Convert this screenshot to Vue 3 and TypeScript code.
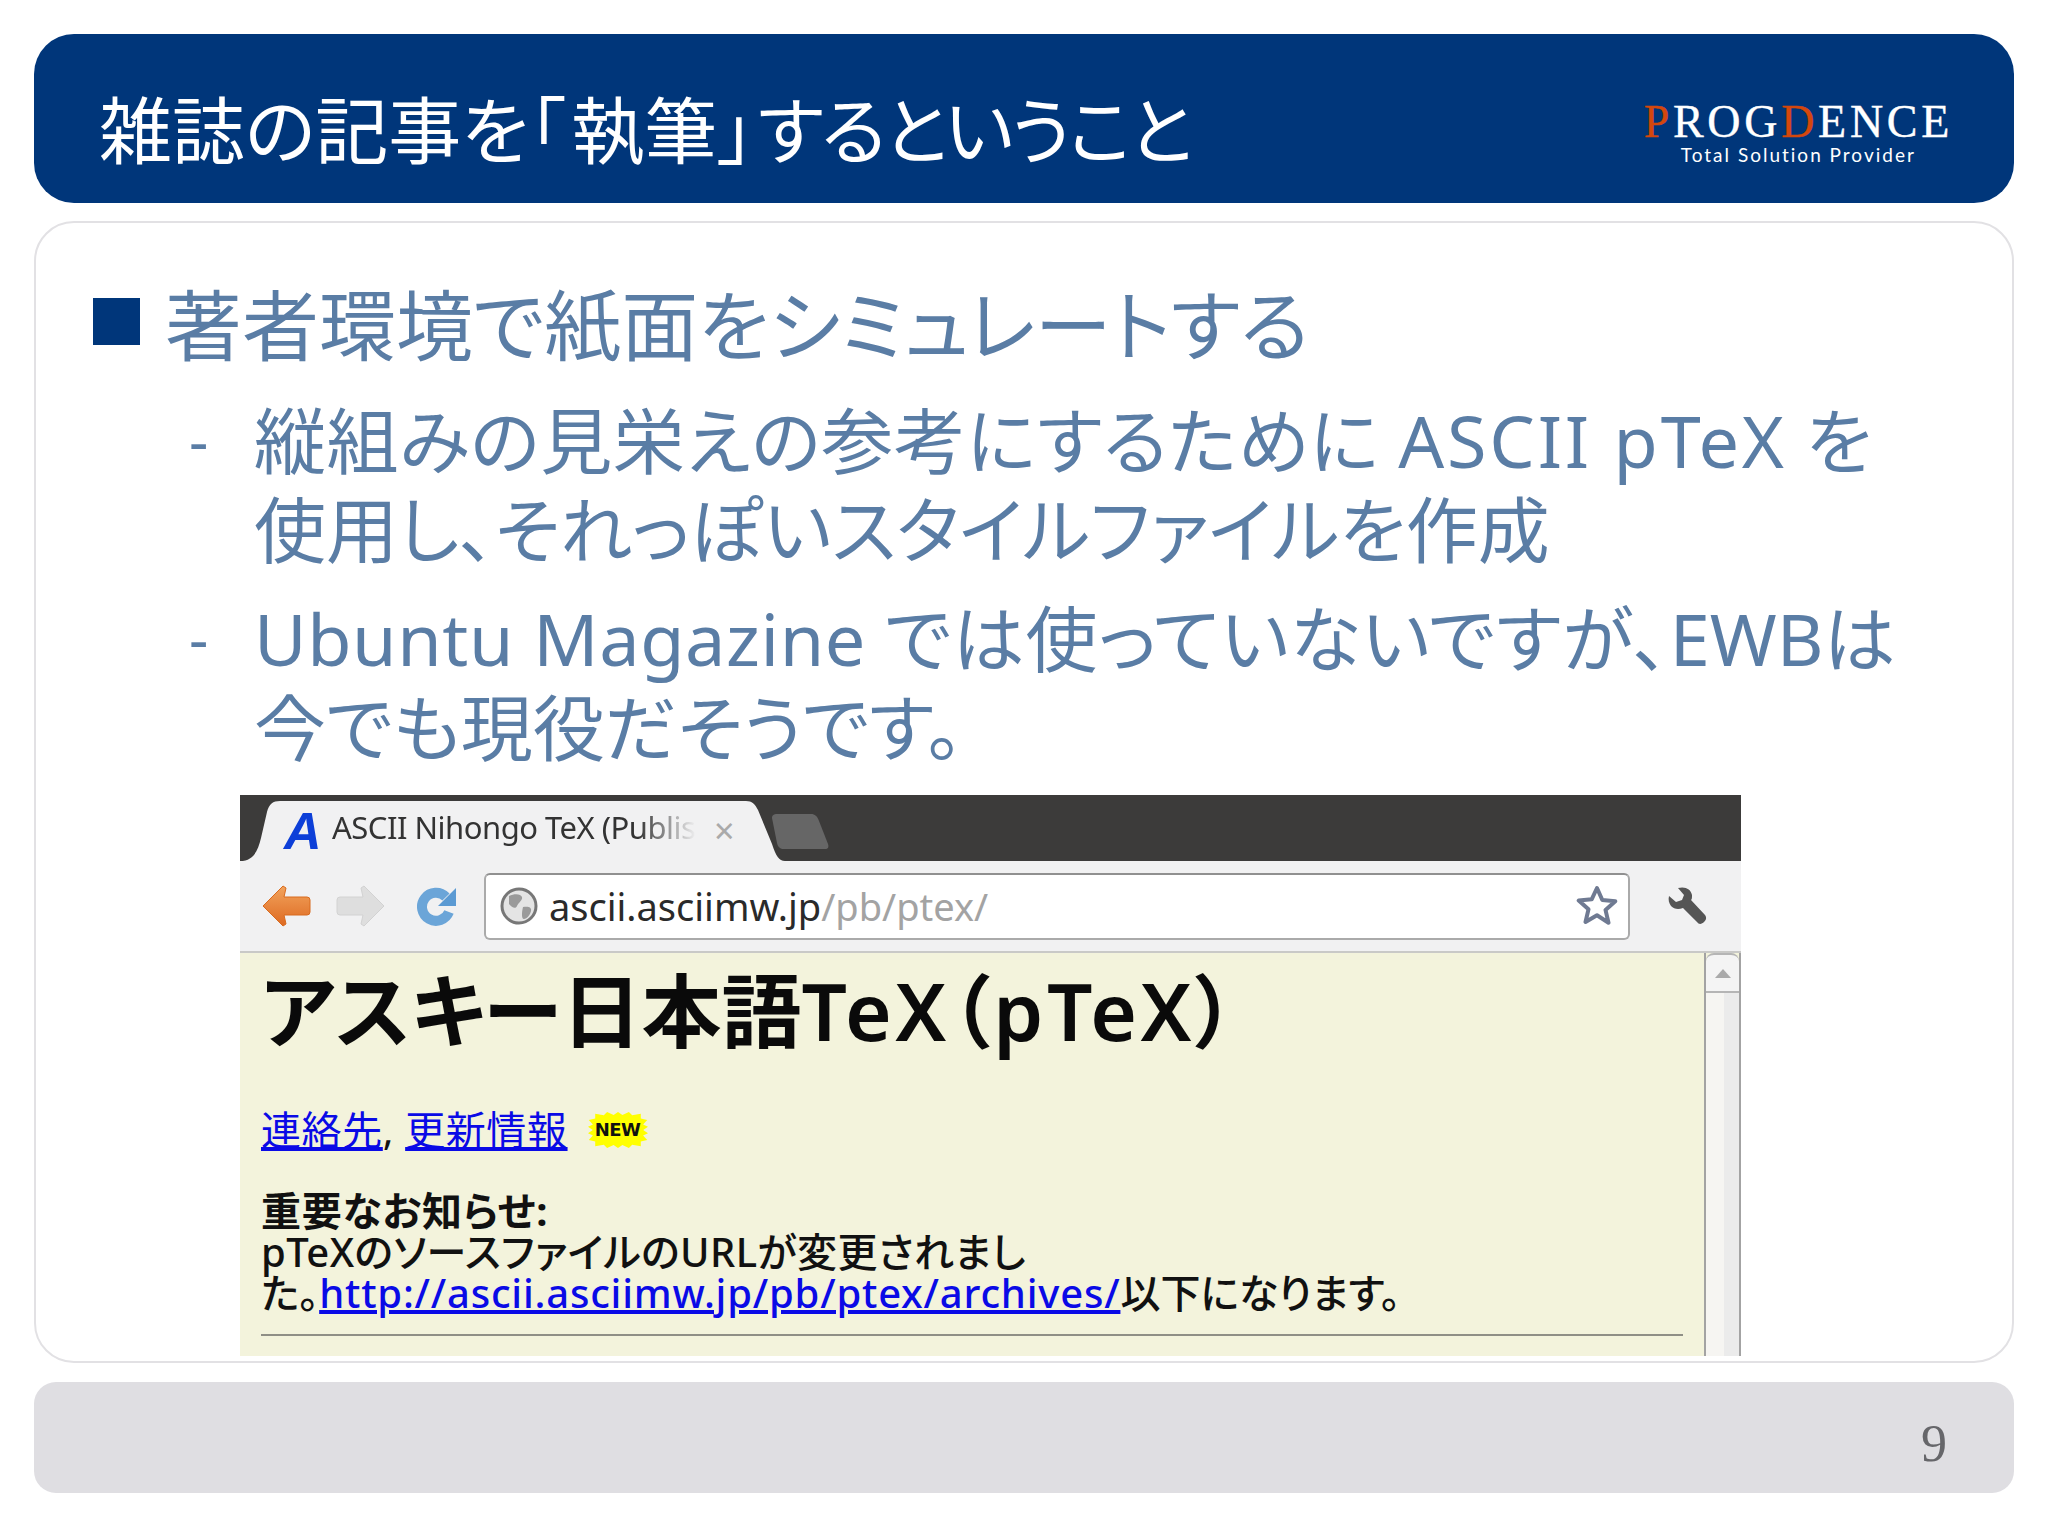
<script setup lang="ts">
const burst = Array.from({ length: 36 }, (_, i) => {
  const a = (i / 36) * Math.PI * 2
  const c = Math.cos(a)
  const s = Math.sin(a)
  // superellipse outline so the burst reads as a spiky rectangle
  const k = 1 / Math.pow(Math.pow(Math.abs(c), 4) + Math.pow(Math.abs(s), 4), 0.25)
  const r = i % 2 ? k : k * 0.84
  return `${(30 + 30 * r * c).toFixed(1)},${(18 + 18 * r * s).toFixed(1)}`
}).join(' ')
</script>

<template>
  <div class="page">
    <header class="head">
      <h1 class="title">雑誌の記事を<span class="open">「</span>執筆<span class="shut">」</span><span class="kana">するということ</span></h1>
      <div class="logo">
        <div class="brand"><span class="red">P</span>ROG<span class="red">D</span>ENCE</div>
        <div class="tag">Total Solution Provider</div>
      </div>
    </header>

    <main class="card">
      <div class="l1"><span class="sq"></span><span>著者環境で紙面をシミュレートする</span></div>
      <div class="l2"><span class="dash">-</span><span><span class="ja-a">縦組みの見栄えの参考にするために</span> <span class="lat-a">ASCII pTeX</span> を<br />使用し、それっぽいスタイルファイルを作成</span></div>
      <div class="l2 second"><span class="dash">-</span><span><span class="lat-b">Ubuntu Magazine</span> <span class="ja-b">では使っていないですが、</span>EWBは<br />今でも現役だそうです。</span></div>

      <div class="shot">
        <div class="tabbar">
          <div class="tab">
            <svg class="tabshape" viewBox="0 0 545 61" preserveAspectRatio="none"><path d="M0 61C14 61 18 50 21 38L27 12C29 4 33 1 40 1H506C512 1 515 4 518 10L532 44C536 56 539 61 545 61Z" fill="#f1f1f2" /></svg>
            <span class="fav">A</span>
            <span class="tabtext">ASCII Nihongo TeX (Publish</span>
            <span class="close">×</span>
          </div>
          <svg class="newtab" viewBox="0 0 60 37"><path d="M2 5C2 2 4 1 7 1H41C45 1 47 3 49 8L58 31C59 34 58 36 55 36H14C10 36 8 34 7 30Z" fill="#666" /></svg>
        </div>

        <div class="toolbar">
          <svg class="ic back" viewBox="0 0 50 44"><defs><linearGradient id="bk" x1="0" y1="0" x2="0" y2="1"><stop offset="0" stop-color="#f2a35c" /><stop offset="1" stop-color="#de6a22" /></linearGradient></defs><path d="M22 2 2 22l20 20 3-2-2-9h23a3 3 0 0 0 3-3V16a3 3 0 0 0-3-3H23l2-9Z" fill="url(#bk)" stroke="#d86a1e" stroke-linejoin="round" /></svg>
          <svg class="ic fwd" viewBox="0 0 50 44"><path d="M28 2l20 20-20 20-3-2 2-9H4a3 3 0 0 1-3-3V16a3 3 0 0 1 3-3h23l-2-9Z" fill="#dedede" stroke="#d2d2d2" stroke-linejoin="round" /></svg>
          <svg class="ic reload" viewBox="0 0 42 42"><path d="M31 12a14 14 0 1 0 3 15" fill="none" stroke="#6ba5d8" stroke-width="10" /><path d="M41 3v18H23Z" fill="#5b9ad3" /></svg>
          <div class="addr">
            <svg class="globe" viewBox="0 0 38 38"><circle cx="19" cy="19" r="17" fill="#e4e4e4" stroke="#777" stroke-width="3" /><path d="M9 9c6-3 12-2 13 1s-4 6-5 9-5 2-8-2ZM23 20c5-1 9 0 8 4s-4 8-7 8-2-8-1-12Z" fill="#9a9a9a" /></svg>
            <span class="url">ascii.asciimw.jp<span class="dim">/pb/ptex/</span></span>
            <svg class="star" viewBox="0 0 42 42"><path d="M21 3l5.3 12 13 1.2-9.8 8.7 3 12.8L21 30.2 9.500 37l3-12.800-9.800-8.700 13-1.200Z" fill="#fff" stroke="#6f7a92" stroke-width="4" stroke-linejoin="round" /></svg>
          </div>
          <svg class="wrench" viewBox="0 0 42 42"><path d="M4 11 11 17l6-2 2-5-6-7c7-2 13 1 14 7 0 3 0 4-1 5l14 15c2 3 1 5-1 7s-5 3-7 0L18 23c-5 2-9 1-12-2-2-3-3-6-2-10Z" fill="#555" /></svg>
        </div>

        <div class="view">
          <div class="doc">
            <div class="doch">アスキー日本語<span class="doclat">TeX（pTeX）</span></div>
            <div class="links"><a class="lnk">連絡先</a>, <a class="lnk">更新情報</a>
              <span class="new"><svg viewBox="0 0 60 36" preserveAspectRatio="none"><polygon :points="burst" fill="#ffff00" /></svg><span class="newt">NEW</span></span>
            </div>
            <div class="notice">
              <div class="strong">重要なお知らせ:</div>
              <div class="mid">pTeXのソースファイルのURLが変更されまし</div>
              <div>た。<a class="lnk url-link">http://ascii.asciimw.jp/pb/ptex/archives/</a>以下になります。</div>
            </div>
            <div class="rule"></div>
          </div>
          <div class="scroll">
            <div class="sbtn"><span class="tri"></span></div>
            <div class="strack"></div>
          </div>
        </div>
      </div>
    </main>

    <footer class="foot"><span class="num">9</span></footer>
  </div>
</template>

<style>
html, body { margin: 0; background: #fff; }
</style>

<style scoped>
.page {
  width: 2048px;
  height: 1536px;
  box-sizing: border-box;
  padding: 34px 34px 43px;
  display: flex;
  flex-direction: column;
  font-family: "Noto Sans", "Noto Sans CJK JP", sans-serif;
  font-feature-settings: "palt";
  overflow: hidden;
}
.head {
  height: 169px;
  flex: none;
  background: #00367a;
  border-radius: 40px;
  display: flex;
  align-items: center;
  justify-content: space-between;
  padding: 0 61px 0 65px;
  color: #fff;
}
.title { margin: 22px 0 0; font-size: 73px; font-weight: 400; line-height: 1; white-space: nowrap; }
.open { letter-spacing: 6px; }
.shut { letter-spacing: 4px; }
.kana { letter-spacing: -3px; }
.logo { display: flex; flex-direction: column; align-items: center; margin-top: 28px; }
.brand {
  font-family: "Liberation Serif", serif;
  font-size: 46px;
  line-height: 44px;
  letter-spacing: 3.700px;
  -webkit-text-stroke: 0.4px currentColor;
  font-feature-settings: normal;
}
.red { color: #d4470d; }
.tag { font-family: Lato, sans-serif; font-size: 19px; line-height: 22px; letter-spacing: 2px; font-feature-settings: normal; }
.card {
  margin-top: 18px;
  height: 1142px;
  flex: none;
  box-sizing: border-box;
  border: 2px solid #e2e1e4;
  border-radius: 40px;
  padding: 49px 0 0 57px;
  overflow: hidden;
}
.l1 {
  display: flex;
  align-items: center;
  color: #5a7da5;
  font-size: 77px;
  line-height: 108px;
  height: 108px;
}
.sq { width: 47px; height: 47px; background: #00367a; margin: 0 25px 10px 0; flex: none; }
.l2 {
  display: flex;
  margin-top: 16px;
  margin-left: 96px;
  color: #5a7da5;
  font-size: 72px;
  line-height: 89px;
  white-space: nowrap;
}
.second { margin-top: 20px; }
.ja-a { letter-spacing: 0.6px; }
.ja-b { letter-spacing: 1.100px; }
.lat-a { letter-spacing: 2.800px; }
.lat-b { letter-spacing: 0.6px; }
.dash { width: 65px; flex: none; font-size: 60px; }
.shot { width: 1501px; margin: 23px 0 0 147px; height: 561px; display: flex; flex-direction: column; }
.tabbar { height: 66px; background: #3c3b3a; flex: none; display: flex; align-items: flex-end; }
.tab {
  position: relative;
  width: 545px;
  height: 61px;
  display: flex;
  align-items: center;
  flex: none;
  font-feature-settings: normal;
  color: #333;
}
.tabshape { position: absolute; inset: 0; width: 100%; height: 100%; }
.fav {
  position: relative;
  margin-left: 44px;
  width: 48px;
  font: italic 700 52px/1 "Liberation Sans", sans-serif;
  color: #0d3fd8;
}
.tabtext {
  position: relative;
  width: 364px;
  margin-bottom: 8px;
  overflow: hidden;
  white-space: nowrap;
  font-size: 31px;
  letter-spacing: -0.5px;
  -webkit-mask-image: linear-gradient(90deg, #000 84%, transparent);
  mask-image: linear-gradient(90deg, #000 84%, transparent);
}
.close { position: relative; margin-left: 18px; color: #aaa; font-size: 36px; line-height: 1; }
.newtab { width: 60px; height: 37px; margin: 0 0 11px -15px; flex: none; }
.toolbar {
  height: 90px;
  background: #f1f1f2;
  border-bottom: 2px solid #c9c9c7;
  flex: none;
  display: flex;
  align-items: center;
  padding-left: 21px;
}
.ic { flex: none; }
.back { width: 50px; height: 44px; margin-right: 25px; }
.fwd { width: 50px; height: 44px; margin-right: 29px; }
.reload { width: 42px; height: 42px; margin-right: 27px; }
.addr {
  width: 1146px;
  height: 67px;
  box-sizing: border-box;
  background: #fff;
  border: 2px solid #aaa;
  border-top-color: #909090;
  border-radius: 6px;
  display: flex;
  align-items: center;
  padding-left: 14px;
  flex: none;
}
.globe { width: 38px; height: 38px; flex: none; }
.url { margin-left: 11px; font-size: 38px; color: #2a2a2a; font-feature-settings: normal; }
.dim { color: #a3a3a3; }
.star { width: 42px; height: 42px; margin-left: auto; margin-right: 10px; flex: none; }
.wrench { width: 42px; height: 42px; margin-left: 35px; flex: none; }
.view { flex: 1; min-height: 0; display: flex; background: #f3f3dc; }
.doc { flex: 1; padding: 11px 21px 0; color: #111; }
.doch { font-size: 80px; line-height: 92px; font-weight: 600; white-space: nowrap; color: #0a0a0a; }
.doclat { letter-spacing: 3.500px; }
.links { margin-top: 49px; font-size: 40px; line-height: 50px; display: flex; align-items: center; white-space: pre; letter-spacing: 0.6px; }
.lnk { color: #0a0ae6; text-decoration: underline; }
.new { position: relative; display: inline-flex; width: 60px; height: 36px; margin-left: 20px; align-items: center; justify-content: center; }
.new svg { position: absolute; inset: 0; width: 100%; height: 100%; }
.newt { position: relative; font: 700 18px/1 "DejaVu Sans", sans-serif; color: #111; letter-spacing: -0.5px; }
.notice { margin-top: 35px; font-size: 40px; line-height: 41px; white-space: nowrap; font-weight: 500; }
.strong { font-weight: 700; letter-spacing: 0.8px; }
.mid { letter-spacing: 0.4px; }
.url-link { letter-spacing: 0.8px; }
.rule { height: 0; margin-top: 21px; border-top: 2px solid #8f8f86; width: 1422px; }
.scroll { width: 37px; flex: none; box-sizing: border-box; border-left: 2px solid #a3a3a3; border-right: 2px solid #a3a3a3; display: flex; flex-direction: column; }
.sbtn { height: 36px; background: #f4f4f4; border-top: 2px solid #b5b5b5; border-bottom: 2px solid #b5b5b5; border-radius: 8px 8px 0 0; display: flex; align-items: center; justify-content: center; flex: none; }
.tri { width: 0; height: 0; border-left: 8px solid transparent; border-right: 8px solid transparent; border-bottom: 9px solid #aaa; }
.strack { flex: 1; background: linear-gradient(90deg, #f6f5f2 55%, #ebebeb 55%); }
.foot {
  margin-top: 19px;
  flex: 1;
  background: #dfdee2;
  border-radius: 22px;
  display: flex;
  align-items: center;
  justify-content: flex-end;
  padding: 12px 67px 0 0;
}
.num { font-family: "Liberation Serif", serif; font-size: 52px; color: #66666a; font-feature-settings: normal; }
</style>
